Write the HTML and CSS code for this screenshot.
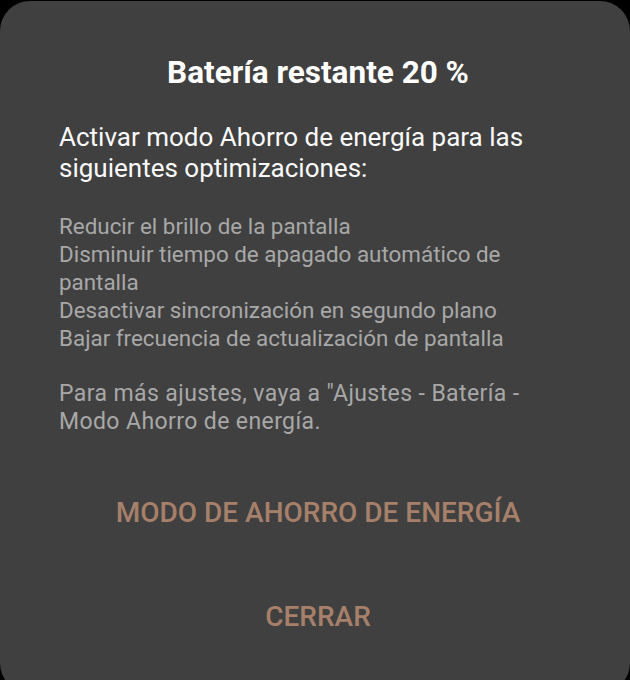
FILE: index.html
```html
<!DOCTYPE html>
<html lang="es">
<head>
<meta charset="utf-8">
<title>Batería</title>
<link rel="stylesheet" href="styles.css">
</head>
<body>
<div class="dialog">
  <h1 class="title">Batería restante 20 %</h1>
  <p class="lead">Activar modo Ahorro de energía para las siguientes optimizaciones:</p>
  <ul class="list">
    <li>Reducir el brillo de la pantalla</li>
    <li>Disminuir tiempo de apagado automático de pantalla</li>
    <li>Desactivar sincronización en segundo plano</li>
    <li>Bajar frecuencia de actualización de pantalla</li>
  </ul>
  <p class="note">Para más ajustes, vaya a "Ajustes - Batería - Modo Ahorro de energía.</p>
  <div class="actions">
    <button class="btn btn-primary">MODO DE AHORRO DE ENERGÍA</button>
    <button class="btn btn-close">CERRAR</button>
  </div>
</div>
</body>
</html>
```
FILE: styles.css
```css
html, body {
  margin: 0;
  padding: 0;
  background: #000;
  height: 680px;
  overflow: hidden;
}
body {
  font-family: Roboto, "Liberation Sans", sans-serif;
}
.dialog {
  margin-top: 1px;
  height: 692px;
  background: #404040;
  border-radius: 30px;
  box-sizing: border-box;
  padding: 54px 53px 0 59px;
}
.title {
  margin: 0;
  text-align: center;
  color: #fff;
  font-size: 31.5px;
  font-weight: 700;
  line-height: 36px;
}
.lead {
  margin: 31px 0 0 0;
  max-width: 495px;
  color: #fafafa;
  font-size: 26px;
  line-height: 31px;
}
.list {
  list-style: none;
  margin: 28px 0 0 0;
  padding: 0;
  max-width: 495px;
  color: #a8a8a8;
  font-size: 22.4px;
  line-height: 28px;
}
.note {
  margin: 28px 0 0 0;
  max-width: 490px;
  color: #a8a8a8;
  font-size: 23px;
  letter-spacing: 0.4px;
  line-height: 28px;
}
.actions {
  display: flex;
  flex-direction: column;
  align-items: center;
  margin-top: 59px;
  gap: 68px;
}
.btn {
  background: none;
  border: 0;
  padding: 0;
  font-family: Roboto, "Liberation Sans", sans-serif;
  font-size: 28px;
  line-height: 36px;
  font-weight: 500;
  color: #a6806a;
}
```
